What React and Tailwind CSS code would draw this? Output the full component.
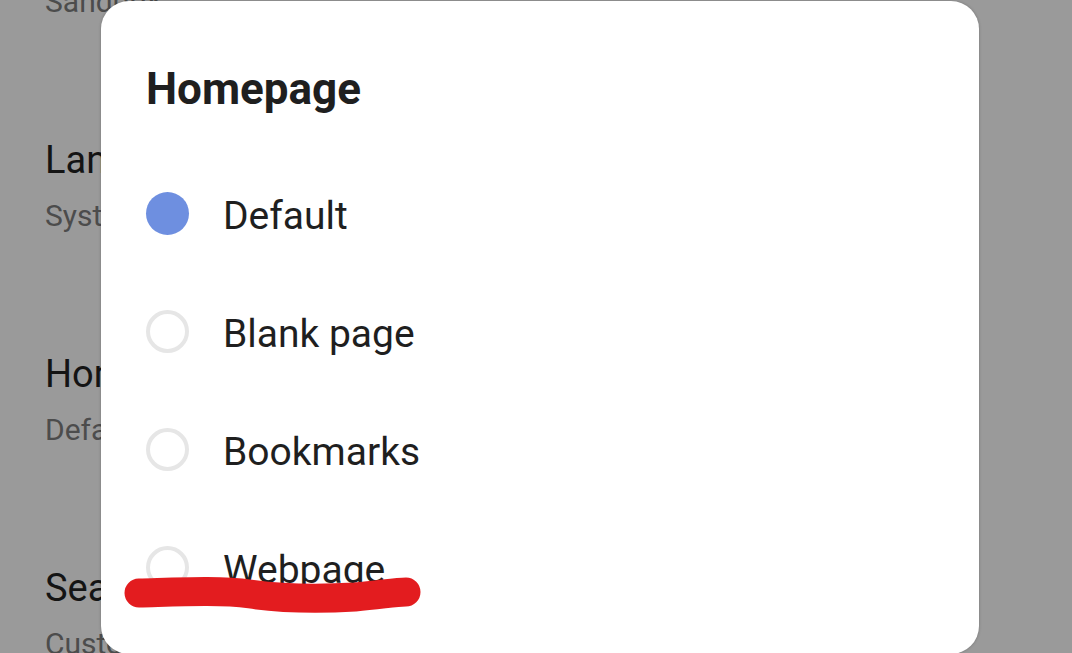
import React from 'react';

const settings = [
    { title: 'Sandbox', sub: 'Sandbox' },
    { title: 'Language', sub: 'System default' },
    { title: 'Homepage', sub: 'Default' },
    { title: 'Search engine', sub: 'Custom' },
];

const options = ['Default', 'Blank page', 'Bookmarks', 'Webpage'];

function Radio({ checked }) {
    if (checked) {
        return <div className="w-[43px] h-[43px] rounded-full bg-[#6e8fe0] shrink-0" />;
    }
    return <div className="w-[43px] h-[43px] rounded-full border-[4px] border-[#e6e6e6] shrink-0" />;
}

export default function App() {
    return (
        <div
            className="relative w-[1072px] h-[653px] overflow-hidden bg-[#9a9a9a]"
            style={{ fontFamily: 'Roboto, "Noto Sans", sans-serif' }}
        >
            {/* Settings list behind the scrim */}
            <div className="flex flex-col gap-[114px] pl-[45px] mt-[-78px]">
                {settings.map((s) => (
                    <div key={s.title} className="flex flex-col">
                        <span className="text-[38px] leading-[48px] text-[#141414]">{s.title}</span>
                        <span className="mt-[12px] text-[30px] leading-[40px] text-[#4c4c4c]">{s.sub}</span>
                    </div>
                ))}
            </div>

            {/* Dialog */}
            <div className="absolute left-[101px] top-[1px] w-[878px] h-[653px] bg-white rounded-[28px] shadow-[0_0_3px_rgba(0,0,0,0.25)] pl-[45px] pt-[62px]">
                <h2 className="text-[44px] leading-[52px] font-bold text-[#1f1f1f] mb-[39px]">Homepage</h2>
                <div className="flex flex-col">
                    {options.map((o, i) => (
                        <div key={o} className="h-[118px] flex items-center gap-[34px]">
                            <Radio checked={i === 0} />
                            <span className="mt-[6px] text-[39px] leading-[48px] text-[#1f1f1f]">{o}</span>
                        </div>
                    ))}
                </div>
            </div>

            {/* Red marker annotation */}
            <svg className="absolute left-0 top-0" width="1072" height="653" viewBox="0 0 1072 653">
                <path
                    d="M139 593 C 180 592, 220 590, 250 594 C 285 599, 320 599, 355 597 C 380 595, 395 592, 406 592"
                    fill="none"
                    stroke="#e31c1f"
                    strokeWidth="29"
                    strokeLinecap="round"
                />
            </svg>
        </div>
    );
}
